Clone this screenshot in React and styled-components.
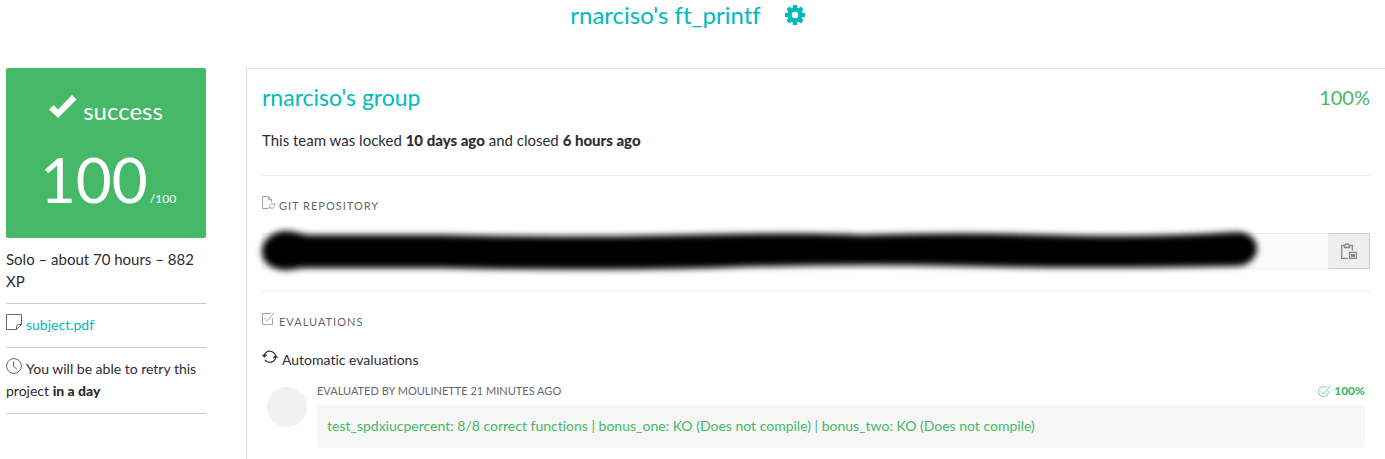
import React from "react";
import styled, { createGlobalStyle } from "styled-components";

const teal = "#00babc";
const green = "#45b967";
const ink = "#2d2d33";
const grey = "#66666b";

const GlobalStyle = createGlobalStyle`
  * { box-sizing: border-box; }
  body {
    margin: 0;
    background: #fff;
    color: ${ink};
    font-family: Lato, "Open Sans", sans-serif;
    font-size: 14px;
    font-variant-ligatures: none;
    line-height: 22px;
  }
  h1, h2, h3, h4, p { margin: 0; font-weight: 400; }
  a { color: ${teal}; text-decoration: none; }
  b { font-weight: 900; }
`;

const PageHeader = styled.header`
  display: flex;
  justify-content: center;
  align-items: center;
  gap: 24px;
  height: 30px;
  margin-bottom: 38px;
  padding-right: 10px;
  color: ${teal};
`;

const PageTitle = styled.h1`
  font-size: 24px;
  line-height: 30px;
`;

const IconButton = styled.button`
  display: flex;
  padding: 0;
  border: 0;
  background: none;
  color: inherit;
  cursor: pointer;
`;

const Layout = styled.div`
  display: grid;
  grid-template-columns: 200px minmax(0, 1fr);
  gap: 40px;
  padding-left: 6px;
`;

const Sidebar = styled.aside`
  display: flex;
  flex-direction: column;
`;

const ScoreCard = styled.section`
  display: flex;
  flex-direction: column;
  align-items: center;
  height: 170px;
  padding-top: 24px;
  border-radius: 2px;
  background: ${green};
  color: #fff;
`;

const Status = styled.div`
  display: flex;
  align-items: flex-start;
  gap: 6px;
  font-size: 24px;
  line-height: 38px;
`;

const Score = styled.div`
  display: flex;
  align-items: baseline;
  gap: 2px;
  padding: 10px 0 0 4px;
  font-size: 62px;
  line-height: 78px;
`;

const ScoreMax = styled.span`
  font-size: 12px;
`;

const SideRow = styled.div`
  padding: 10px 0 11px;
  border-bottom: 1px solid #ccc;
  font-size: ${(p) => (p.$summary ? "15px" : "14px")};

  svg { margin-right: 4px; color: ${grey}; }
`;

const Panel = styled.main`
  min-width: 0;
  padding: 12px 15px;
  border-top: 1px solid #ddd;
  border-left: 1px solid #ddd;
`;

const SplitRow = styled.div`
  display: flex;
  justify-content: space-between;
  align-items: center;
`;

const TeamName = styled.h2`
  color: ${teal};
  font-size: 23px;
  line-height: 32px;
`;

const TeamMark = styled.span`
  color: ${green};
  font-size: 20px;
  line-height: 32px;
`;

const TeamDates = styled.p`
  margin-top: 16px;
  padding-bottom: 24px;
  border-bottom: 1px solid #eee;
  font-size: 15px;
`;

const SectionTitle = styled.h3`
  display: flex;
  align-items: flex-start;
  gap: 4px;
  margin-top: 20px;
  color: ${grey};
  font-size: 11px;
  letter-spacing: 1px;
  line-height: 20px;
  text-transform: uppercase;
`;

const Repository = styled.div`
  position: relative;
  display: flex;
  height: 36px;
  margin: 17px 0 22px;
`;

const RepositoryUrl = styled.input`
  flex: 1;
  min-width: 0;
  padding: 0 10px;
  border: 1px solid #eee;
  border-right: 0;
  background: #fbfbfb;
  font: inherit;
`;

const CopyButton = styled.button`
  display: flex;
  justify-content: center;
  align-items: center;
  width: 42px;
  padding: 0;
  border: 1px solid #ccc;
  border-left-color: #eee;
  background: #eee;
  color: #888;
`;

const Redaction = styled.svg`
  position: absolute;
  top: -6px;
  left: 0;
  width: calc(100% - 112px);
  height: 48px;
  overflow: visible;
  filter: blur(3px);
  pointer-events: none;
`;

const Divider = styled.hr`
  height: 1px;
  margin: 0;
  border: 0;
  background: #eee;
`;

const EvaluationKind = styled.h4`
  margin-top: 17px;
  line-height: 22px;

  svg { margin-right: 4px; }
`;

const Evaluation = styled.article`
  display: grid;
  grid-template-columns: 40px minmax(0, 1fr);
  gap: 10px;
  padding: 10px 5px;
`;

const Avatar = styled.div`
  width: 40px;
  height: 40px;
  margin-top: 6px;
  border-radius: 50%;
  background: #f1f1f1;
`;

const EvaluationMeta = styled(SplitRow)`
  height: 20px;
  margin-bottom: 4px;
  color: ${grey};
  font-size: 11px;
  line-height: 20px;
  text-transform: uppercase;
`;

const EvaluationMark = styled.span`
  display: flex;
  align-items: center;
  gap: 3px;
  color: ${green};
  font-size: 12px;
`;

const Feedback = styled.p`
  padding: 10px 10px 11px;
  border-radius: 3px;
  background: #f6f6f6;
  color: ${green};
`;

const LineIcon = ({ size = 16, box = 16, width = 1, children }) => (
  <svg width={size} height={size} viewBox={`0 0 ${box} ${box}`} fill="none" stroke="currentColor" strokeWidth={width} aria-hidden="true">
    {children}
  </svg>
);

const Gear = () => (
  <svg width="20" height="20" viewBox="0 0 20 20" aria-hidden="true">
    <g fill="currentColor">
      {[0, 45, 90, 135].map((a) => (
        <path key={a} d="M8 0H12L12.6 5V15L12 20H8L7.4 15V5Z" transform={`rotate(${a} 10 10)`} />
      ))}
      <circle cx="10" cy="10" r="7.4" />
    </g>
    <circle cx="10" cy="10" r="3.2" fill="#fff" />
  </svg>
);

const Tick = () => (
  <svg width="28" height="32" viewBox="0 0 28 32" aria-hidden="true">
    <path d="M0 17.5L4.5 13L9 17.5L23 3L27.5 7.5L9 26Z" fill="currentColor" />
  </svg>
);

const Note = () => (
  <LineIcon>
    <path d="M.5 .5H15.5V10.5L10.5 15.5H.5ZM10.5 15.5V13Q10.5 10.5 13 10.5H15.5" />
  </LineIcon>
);

const Clock = () => (
  <LineIcon>
    <circle cx="8" cy="8" r="7.4" />
    <path d="M7.5 3.5V8L11 11.5" />
  </LineIcon>
);

const RepoFile = () => (
  <LineIcon size={13} box={13}>
    <g opacity=".6">
      <path d="M6 12.5H.5V.5H6.5L9.5 3.5V6M6.5 .5V3.5H9.5" />
      <path d="M7.5 9.5Q8 7.8 10 7.8T12.5 9.5V7.5M12.5 10.5Q12 12.3 10 12.3T7.5 10.5V12.8" />
    </g>
  </LineIcon>
);

const CheckSquare = () => (
  <LineIcon size={13} box={13}>
    <path opacity=".6" d="M9 1.5H.5V12.5H10.5V6M2.5 6L5.2 8.8L12 1" />
  </LineIcon>
);

const CheckCircle = () => (
  <LineIcon size={13} box={13}>
    <path opacity=".7" d="M8.7 2.8A5 5 0 1 0 10.4 6M3 6.2L5.4 9L12.6 .8" />
  </LineIcon>
);

const Cycle = () => (
  <LineIcon width={1.2}>
    <path d="M3 4.6A6 6 0 0 1 13.7 7.5M.5 5.7L2.3 7.8L4.7 5.8M2.3 7.8A6 6 0 0 1 3 4.6M13 10.4A6 6 0 0 1 3 10.9M11.3 9L13.7 6.8L15.6 8.9M13.7 6.8A6 6 0 0 1 13 10.4" />
  </LineIcon>
);

const Clipboard = () => (
  <LineIcon width={1.3}>
    <path d="M7 15.4H.7V2.5H3.5M8.5 2.5H11.4V7.5M3.5 4.5V2.5L5 1H7L8.5 2.5V4.5Z" />
    <rect x="8.6" y="9.4" width="6.8" height="6" />
    <rect x="10" y="11" width="4" height="3" fill="currentColor" stroke="none" />
  </LineIcon>
);

export default function App() {
  return (
    <>
      <GlobalStyle />
      <PageHeader>
        <PageTitle>rnarciso's ft_printf</PageTitle>
        <IconButton type="button" aria-label="Project settings"><Gear /></IconButton>
      </PageHeader>
      <Layout>
        <Sidebar>
          <ScoreCard>
            <Status><Tick />success</Status>
            <Score>100<ScoreMax>/100</ScoreMax></Score>
          </ScoreCard>
          <SideRow $summary>Solo – about 70 hours – 882 XP</SideRow>
          <SideRow><Note /><a href="#subject">subject.pdf</a></SideRow>
          <SideRow><Clock />You will be able to retry this project <b>in a day</b></SideRow>
        </Sidebar>
        <Panel>
          <SplitRow>
            <TeamName>rnarciso's group</TeamName>
            <TeamMark>100%</TeamMark>
          </SplitRow>
          <TeamDates>This team was locked <b>10 days ago</b> and closed <b>6 hours ago</b></TeamDates>
          <SectionTitle><RepoFile />Git repository</SectionTitle>
          <Repository>
            <RepositoryUrl readOnly aria-label="Git repository address" />
            <CopyButton type="button" aria-label="Copy address"><Clipboard /></CopyButton>
            <Redaction viewBox="0 0 996 48" preserveAspectRatio="none" aria-hidden="true">
              <path d="M0 25C0 12 12 4 24 4C34 4 40 8 50 8H180Q300 11 420 8T600 8Q700 5 790 8T975 5C988 5 995 13 995 21C995 31 986 39 975 39Q820 42 700 39T450 41Q300 44 180 41H44C36 41 32 43 24 43C11 43 0 36 0 25Z" />
            </Redaction>
          </Repository>
          <Divider />
          <SectionTitle><CheckSquare />Evaluations</SectionTitle>
          <EvaluationKind><Cycle />Automatic evaluations</EvaluationKind>
          <Evaluation>
            <Avatar />
            <div>
              <EvaluationMeta>
                <span>Evaluated by moulinette 21 minutes ago</span>
                <EvaluationMark><CheckCircle /><b>100%</b></EvaluationMark>
              </EvaluationMeta>
              <Feedback>
                test_spdxiucpercent: 8/8 correct functions | bonus_one: KO (Does not compile) | bonus_two: KO (Does not compile)
              </Feedback>
            </div>
          </Evaluation>
        </Panel>
      </Layout>
    </>
  );
}
